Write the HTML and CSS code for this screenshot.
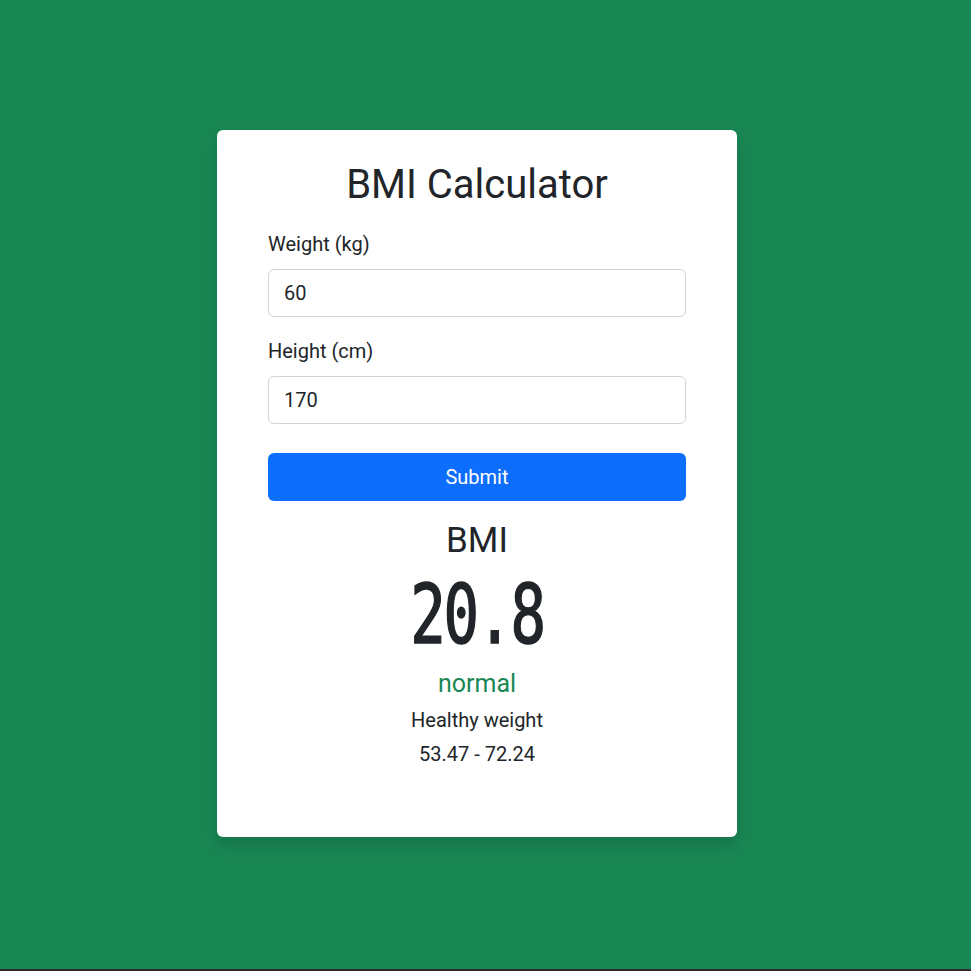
FILE: index.html
```html
<!DOCTYPE html>
<html lang="en">
<head>
<meta charset="utf-8">
<title>BMI Calculator</title>
<link rel="stylesheet" href="styles.css">
</head>
<body>
<main class="page">
  <section class="card">
    <h1 class="title">BMI Calculator</h1>
    <form class="form">
      <div class="field">
        <label class="label" for="w">Weight (kg)</label>
        <input class="input" id="w" type="text" value="60">
      </div>
      <div class="field">
        <label class="label" for="h">Height (cm)</label>
        <input class="input" id="h" type="text" value="170">
      </div>
      <button class="btn" type="button">Submit</button>
    </form>
    <div class="result">
      <h2 class="result-title">BMI</h2>
      <div class="result-value">20.8</div>
      <div class="result-status">normal</div>
      <div class="result-label">Healthy weight</div>
      <div class="result-range">53.47 - 72.24</div>
    </div>
  </section>
</main>
</body>
</html>
```
FILE: styles.css
```css
* { box-sizing: border-box; }
html, body { margin: 0; padding: 0; }
body {
  background: #2a2a2a;
  font-family: Roboto, "Liberation Sans", sans-serif;
  color: #212529;
  height: 971px;
  overflow: hidden;
}
.page {
  background: #198754;
  height: 969px;
  display: flex;
  justify-content: center;
  align-items: flex-start;
  padding-top: 130px;
  padding-right: 17px;
}
.card {
  width: 520px;
  height: 707px;
  background: #fff;
  border-radius: 6px;
  box-shadow: 0 8px 16px rgba(0,0,0,0.15);
  padding: 31px 51px 0;
}
.title {
  margin: 0 0 23px;
  font-size: 40px;
  font-weight: 400;
  line-height: 48px;
  text-align: center;
}
.form { display: flex; flex-direction: column; }
.field { display: flex; flex-direction: column; margin-bottom: 22px; }
.label {
  font-size: 20px;
  line-height: 24px;
  margin-bottom: 13px;
}
.input {
  height: 48px;
  border: 1px solid #ced4da;
  border-radius: 6px;
  padding: 0 15px;
  font-family: Roboto, "Liberation Sans", sans-serif;
  font-size: 20px;
  color: #212529;
  background: #fff;
}
.btn {
  margin-top: 7px;
  height: 48px;
  border: none;
  border-radius: 6px;
  background: #0d6efd;
  color: #fff;
  font-family: Roboto, "Liberation Sans", sans-serif;
  font-size: 20px;
}
.result { text-align: center; margin-top: 20px; }
.result-title {
  margin: 0;
  font-size: 35px;
  font-weight: 400;
  line-height: 40px;
}
.result-value {
  font-family: "DejaVu Sans Mono", monospace;
  font-size: 82px;
  line-height: 100px;
  margin-top: 4px;
  transform: scaleX(0.72);
  font-weight: 400;
  letter-spacing: -3px;
  -webkit-text-stroke: 1.6px #212529;
}
.result-status {
  color: #198754;
  font-size: 25px;
  line-height: 32px;
  margin-top: 3px;
}
.result-label {
  font-size: 20px;
  line-height: 36px;
  margin-top: 2px;
}
.result-range {
  font-size: 20px;
  line-height: 32px;
}
```
